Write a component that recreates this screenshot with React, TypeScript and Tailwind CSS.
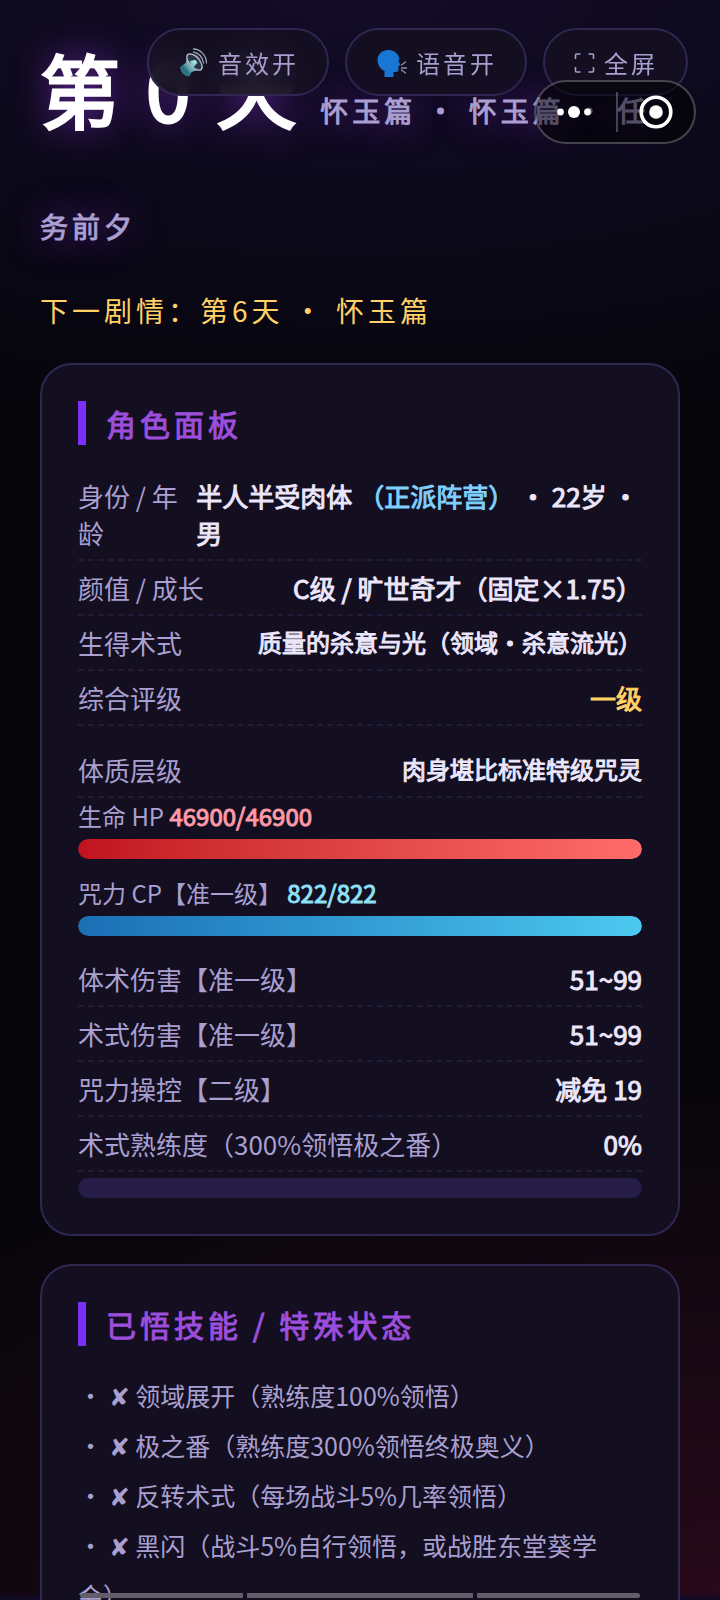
import React from 'react';

interface StatRowProps {
  label: string;
  children: React.ReactNode;
  className?: string;
}

const StatRow: React.FC<StatRowProps> = ({ label, children, className = '' }) => (
  <div className={`flex items-start justify-between border-b-2 border-dashed border-[#211b38] py-2 text-[26px] leading-[37px] ${className}`}>
    <dt className="text-[#a99fd0]">{label}</dt>
    <dd className="text-[#ece6fb] [-webkit-text-stroke:1px]">{children}</dd>
  </div>
);

interface MeterProps {
  label: string;
  current: number;
  max: number;
  valueClass: string;
  fillClass: string;
}

const Meter: React.FC<MeterProps> = ({ label, current, max, valueClass, fillClass }) => (
  <div className="mb-4">
    <p className="text-2xl leading-9 text-[#a99fd0]">
      {label} <b className={`font-normal [-webkit-text-stroke:1px] ${valueClass}`}>{current}/{max}</b>
    </p>
    <div className="mt-[5px] h-5 overflow-hidden rounded-full bg-[#251d45]">
      <div className={`h-full rounded-full bg-linear-to-r ${fillClass}`} style={{ width: `${(current / max) * 100}%` }} />
    </div>
  </div>
);

const Card: React.FC<{ title: string; children: React.ReactNode }> = ({ title, children }) => (
  <section className="mb-7 rounded-[32px] border-2 border-[#2f2750] bg-[#130f21] p-9">
    <h2 className="mb-6 border-l-8 border-[#7b2ff7] pl-5 text-[30px] leading-[44px] font-normal tracking-[4px] text-[#9d4edd] [-webkit-text-stroke:1px]">
      {title}
    </h2>
    {children}
  </section>
);

const ToolButton: React.FC<{ icon: React.ReactNode; label: string }> = ({ icon, label }) => (
  <button
    type="button"
    className="flex h-[68px] items-center gap-2 rounded-full border-2 border-[#2f2750] bg-[#130f21]/92 px-7 pt-0.5 text-2xl tracking-[3px] text-[#a99fd0] backdrop-blur-md"
  >
    {icon}
    <span>{label}</span>
  </button>
);

const SpeakerIcon = () => (
  <svg width="33" height="32" viewBox="0 0 32 32" fill="none" aria-hidden="true">
    <path d="M3 20l5-4 7 7-3 6c-4 1-9-3-9-9z" fill="#4f97a5" />
    <path d="M3 20l3-2 7 9-1 2c-4 1-9-3-9-9z" fill="#2f7383" />
    <path d="M8 17L10 7l14 15-10 3z" fill="#6fa9b2" />
    <ellipse cx="17" cy="15" rx="10" ry="5" transform="rotate(48 17 15)" fill="#293442" stroke="#b8c6d0" strokeWidth="1.3" />
    <path d="M12 14l6-1 2 3-5 5z" fill="#86c8cf" />
    <circle cx="17" cy="15" r="2" fill="#a5dce1" />
    <path d="M17 8c3 1 5 4 6 7M16 5c5 1 9 5 10 11M16 2c7 0 13 7 13 14" stroke="#9aa4b5" strokeWidth="1.3" strokeLinecap="round" />
  </svg>
);

const SpeakingHeadIcon = () => (
  <svg width="33" height="32" viewBox="0 0 32 32" fill="none" aria-hidden="true">
    <path d="M9 30v-6C5 22 2 18 2 13 2 7 7 3 13 3c6 0 10 4 11 9l-1 2 2 4-2 1v4c0 2-2 2-5 2v5z" fill="#1976d2" />
    <path d="M26 18l4-3M26 21h5M26 23l4 3" stroke="#8d93a8" strokeWidth="1.3" strokeLinecap="round" />
  </svg>
);

const FullscreenIcon = () => (
  <svg width="23" height="22" viewBox="0 0 22 22" fill="none" stroke="#a99fd0" strokeWidth="1.6" aria-hidden="true">
    <path d="M2 7V3q0-1 1-1h4M15 2h4q1 0 1 1v4M20 15v4q0 1-1 1h-4M7 20H3q-1 0-1-1v-4" />
  </svg>
);

const SKILLS = [
  '领域展开（熟练度100%领悟）',
  '极之番（熟练度300%领悟终极奥义）',
  '反转术式（每场战斗5%几率领悟）',
  '黑闪（战斗5%自行领悟，或战胜东堂葵学会）',
];

const App: React.FC = () => (
  <div className="relative h-screen overflow-hidden bg-[#05050a] bg-[linear-gradient(to_top,#110a26,transparent_8px),radial-gradient(150%_28%_at_50%_0%,#130c28,transparent),radial-gradient(150%_34%_at_100%_100%,#280a1a,transparent)] font-['Noto_Sans_CJK_SC',sans-serif]">
    <main className="h-full overflow-y-auto px-10 pt-[29px] [scrollbar-width:none]">
      <h1 className="mb-[29px] text-[80px] leading-[116px] font-normal tracking-[4px] text-white [-webkit-text-stroke:3px] [text-shadow:0_0_36px_#7b2fbf]">
        第 0 天
        <small className="ml-5 text-[28px] leading-none text-[#a99fd0] [-webkit-text-stroke:1px]">怀玉篇 · 怀玉篇 · 任务前夕</small>
      </h1>
      <p className="mb-8 text-[28px] leading-[41px] tracking-[4px] text-[#ffd166]">下一剧情：第6天 · 怀玉篇</p>

      <Card title="角色面板">
        <dl>
          <StatRow label="身份 / 年龄">
            半人半受肉体 <span className="text-[#7fd0ff]">（正派阵营）</span> · 22岁 · 男
          </StatRow>
          <StatRow label="颜值 / 成长">C级 / 旷世奇才（固定×1.75）</StatRow>
          <StatRow label="生得术式">
            <span className="block text-2xl leading-[35px]">质量的杀意与光（领域·杀意流光）</span>
          </StatRow>
          <StatRow label="综合评级">
            <span className="text-[#ffd166]">一级</span>
          </StatRow>
          <StatRow label="体质层级" className="mt-[17px]">
            <span className="block text-2xl leading-[35px]">肉身堪比标准特级咒灵</span>
          </StatRow>
        </dl>
        <Meter label="生命 HP" current={46900} max={46900} valueClass="text-[#ff9aa8]" fillClass="from-[#c1121f] to-[#ff6b6b]" />
        <Meter label="咒力 CP【准一级】" current={822} max={822} valueClass="text-[#8fe0f5]" fillClass="from-[#1b6fb5] to-[#4cc9f0]" />
        <dl>
          <StatRow label="体术伤害【准一级】">51~99</StatRow>
          <StatRow label="术式伤害【准一级】">51~99</StatRow>
          <StatRow label="咒力操控【二级】">减免 19</StatRow>
          <StatRow label="术式熟练度（300%领悟极之番）">0%</StatRow>
        </dl>
        <div className="mt-1.5 h-5 rounded-full bg-[#251d45]" />
      </Card>

      <Card title="已悟技能 / 特殊状态">
        <ul className="pr-4 text-[25px] leading-[50px] text-[#a99fd0]">
          {SKILLS.map((skill) => (
            <li key={skill}>{`· ✘ ${skill}`}</li>
          ))}
        </ul>
      </Card>
    </main>

    <div className="absolute top-7 right-8 flex gap-4">
      <ToolButton icon={<SpeakerIcon />} label="音效开" />
      <ToolButton icon={<SpeakingHeadIcon />} label="语音开" />
      <ToolButton icon={<FullscreenIcon />} label="全屏" />
    </div>

    <div className="absolute top-20 right-6 flex h-16 w-[162px] items-center rounded-full border-2 border-white/25 bg-black/50">
      <button type="button" aria-label="更多" className="flex h-full flex-1 items-center justify-center pr-1">
        <svg width="36" height="14" viewBox="0 0 36 14" fill="#fff" aria-hidden="true">
          <circle cx="4.5" cy="7" r="3.4" />
          <circle cx="18" cy="7" r="6" />
          <circle cx="31.5" cy="7" r="3.4" />
        </svg>
      </button>
      <span className="h-10 w-0.5 bg-white/25" />
      <button type="button" aria-label="关闭" className="flex h-full flex-1 items-center justify-center">
        <svg width="34" height="34" viewBox="0 0 34 34" fill="none" aria-hidden="true">
          <circle cx="17" cy="17" r="14.8" stroke="#fff" strokeWidth="3.6" />
          <circle cx="17" cy="17" r="6.8" fill="#fff" />
        </svg>
      </button>
    </div>

    <div className="absolute inset-x-20 bottom-0.5 flex h-[5px] gap-1">
      <span className="flex-[163] rounded-l-full bg-[#625d6b]" />
      <span className="flex-[226] bg-[#625d6b]" />
      <span className="flex-[163] rounded-r-full bg-[#625d6b]" />
    </div>
  </div>
);

export default App;
